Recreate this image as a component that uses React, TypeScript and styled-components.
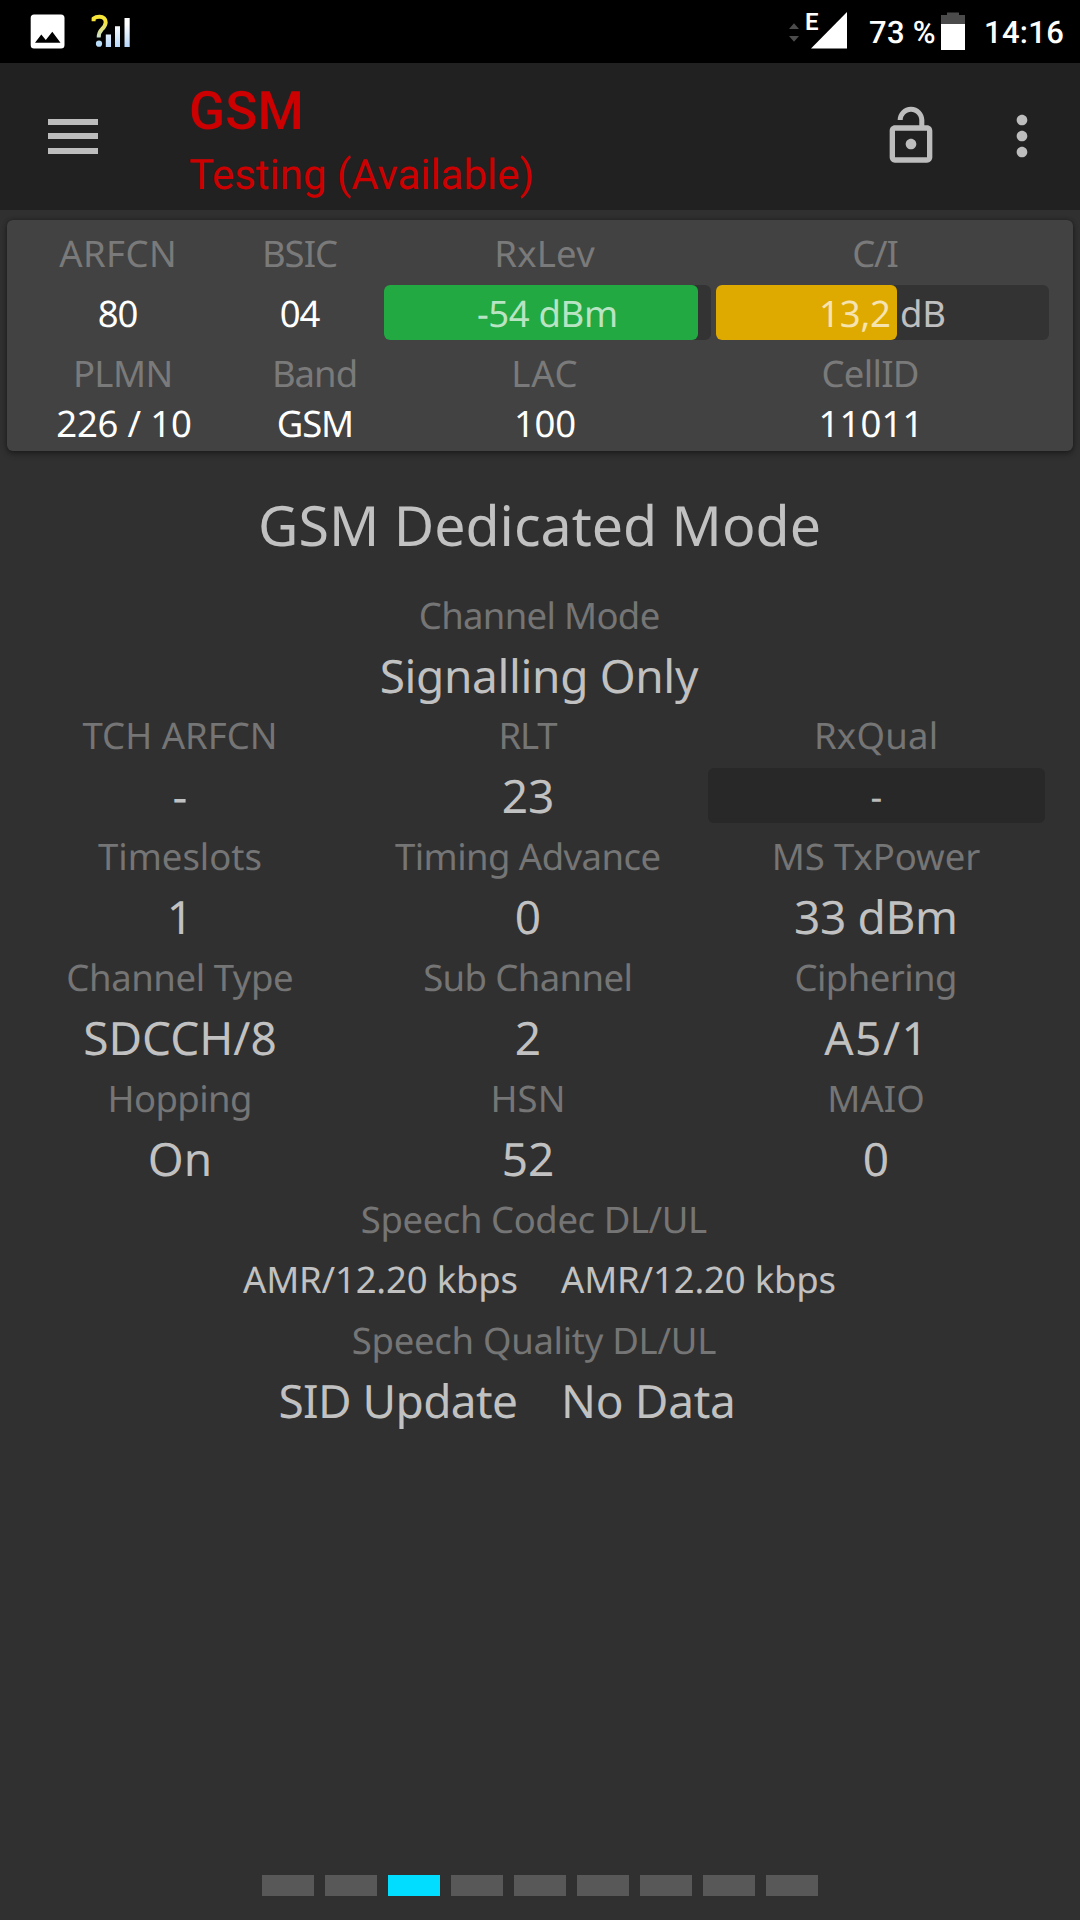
import React from "react";
import styled, { createGlobalStyle } from "styled-components";

const GlobalStyle = createGlobalStyle`
  * { box-sizing: border-box; }
  html, body { margin: 0; padding: 0; background: #303030; }
  body { text-rendering: geometricPrecision; }
`;

const Screen = styled.div`
  display: flex;
  flex-direction: column;
  width: 1080px;
  height: 1920px;
  background: #303030;
  font-family: "Noto Sans", "Open Sans", sans-serif;
  white-space: nowrap;
  overflow: hidden;
`;

/* ---------- status bar ---------- */

const StatusBar = styled.header`
  display: flex;
  align-items: flex-start;
  justify-content: space-between;
  height: 63px;
  padding: 12px 15px 0 30px;
  background: #000;
  color: #fff;
  font-family: Roboto, sans-serif;
`;

const StatusGroup = styled.div`
  display: flex;
  align-items: flex-start;
`;

const StatusText = styled.span<{ $gap: number; $top: number; $width: number }>`
  width: ${(p) => p.$width}px;
  margin: ${(p) => p.$top}px 0 0 ${(p) => p.$gap}px;
  font-size: 31px;
  line-height: 40px;
  font-weight: 500;
  letter-spacing: 0.3px;
`;

const StatusIcon = styled.svg<{ $gap?: number }>`
  display: block;
  margin-left: ${(p) => p.$gap ?? 0}px;
`;

const NetworkType = styled.span`
  width: 5px;
  margin: -4px 0 0 5px;
  padding-right: 6px;
  font-size: 24px;
  line-height: 28px;
  font-weight: 600;
`;

/* ---------- app bar ---------- */

const AppBar = styled.nav`
  display: flex;
  align-items: center;
  height: 147px;
  padding: 0 26px 1px 48px;
  background: #212121;
`;

const MenuButton = styled.div`
  display: flex;
  flex-direction: column;
  gap: 8.5px;
  width: 50px;
  margin-right: 91px;
`;

const MenuLine = styled.span`
  height: 6px;
  background: #bdbdbd;
`;

const TitleBlock = styled.div`
  flex: 1;
  color: #cc0000;
  font-family: Roboto, sans-serif;
`;

const Title = styled.h1`
  margin: 8px 0 8px;
  font-size: 53px;
  line-height: 62px;
  font-weight: 500;
  letter-spacing: 0.15px;
`;

const Subtitle = styled.div`
  font-size: 42px;
  line-height: 51px;
  letter-spacing: -0.04px;
`;

const ActionIcon = styled.svg<{ $gap: number }>`
  display: block;
  width: 64px;
  height: 64px;
  margin-right: ${(p) => p.$gap}px;
  fill: #bdbdbd;
`;

/* ---------- shared text ---------- */

const Text = styled.span<{ $track?: number }>`
  letter-spacing: ${(p) => p.$track ?? 0}px;
  margin-right: ${(p) => -(p.$track ?? 0)}px;
`;

/* ---------- cell card ---------- */

const Card = styled.section`
  flex: none;
  height: 231px;
  margin: 10px 7px 0;
  border-radius: 6px;
  background: #424242;
  box-shadow: 0 3px 6px rgba(0, 0, 0, 0.32), 0 0 4px rgba(0, 0, 0, 0.28);
`;

const CardRow = styled.div<{ $cols: string; $height: number; $top?: number }>`
  display: grid;
  grid-template-columns: ${(p) => p.$cols};
  height: ${(p) => p.$height}px;
  margin-top: ${(p) => p.$top ?? 0}px;
`;

const CardCell = styled.div<{ $label?: boolean }>`
  display: flex;
  align-items: center;
  justify-content: center;
  font-size: 36.5px;
  line-height: 50px;
  color: ${(p) => (p.$label ? "#7a7a7a" : "#ffffff")};
`;

const Meter = styled.div<{ $fill: number; $color: string; $track: string; $end?: number }>`
  display: flex;
  align-items: center;
  justify-content: center;
  height: 55px;
  margin-right: ${(p) => p.$end ?? 0}px;
  border-radius: 6px;
  background: ${(p) => p.$track};
  color: rgba(255, 255, 255, 0.7);
  font-size: 36.5px;
  line-height: 50px;
  position: relative;
  isolation: isolate;
  &::before {
    content: "";
    position: absolute;
    z-index: -1;
    inset: 0 auto 0 0;
    width: ${(p) => p.$fill}px;
    border-radius: 6px;
    background: ${(p) => p.$color};
  }
`;

/* ---------- dedicated mode ---------- */

const Content = styled.main`
  flex: 1;
  padding-top: 12px;
`;

const Heading = styled.h2`
  display: flex;
  justify-content: center;
  margin: 0 1px 0 0;
  font-size: 55.5px;
  line-height: 125px;
  font-weight: 400;
  color: #c1c1c1;
`;

const Grid = styled.div`
  display: grid;
  grid-template-columns: repeat(3, 348px);
  margin-top: -1px;
  padding-left: 6px;
`;

const Label = styled.div<{ $right?: number }>`
  display: flex;
  justify-content: center;
  height: 55px;
  margin-right: ${(p) => p.$right ?? 1}px;
  font-size: 36.5px;
  line-height: 54px;
  color: #757575;
`;

const Value = styled.div<{ $small?: boolean; $right?: number }>`
  display: flex;
  justify-content: center;
  height: 66px;
  margin-right: ${(p) => p.$right ?? 0}px;
  font-size: ${(p) => (p.$small ? 36.5 : 46)}px;
  line-height: ${(p) => (p.$small ? 64 : 66)}px;
  color: #c1c1c1;
`;

const MeterValue = styled.div`
  height: 66px;
  padding: 5px 5px 0 6px;
`;

const Pair = styled.div`
  display: grid;
  grid-template-columns: 518px 1fr;
  column-gap: 43px;
  & > :first-child { justify-content: flex-end; }
  & > :last-child { justify-content: flex-start; }
`;

/* ---------- page indicator ---------- */

const Pager = styled.footer`
  display: flex;
  justify-content: center;
  gap: 11px;
  padding-bottom: 24px;
`;

const PageMark = styled.span<{ $active: boolean }>`
  width: 52px;
  height: 21px;
  background: ${(p) => (p.$active ? "#00ddff" : "#585858")};
`;

type Item = { label: string; lt?: number; value: string; vt?: number; meter?: boolean };

const items: Item[] = [
  { label: "TCH ARFCN", value: "-" },
  { label: "RLT", lt: -1.1, value: "23" },
  { label: "RxQual", lt: 0.25, value: "-", meter: true },
  { label: "Timeslots", value: "1" },
  { label: "Timing Advance", lt: -0.55, value: "0" },
  { label: "MS TxPower", lt: -0.08, value: "33 dBm", vt: -0.35 },
  { label: "Channel Type", lt: -0.42, value: "SDCCH/8", vt: 0 },
  { label: "Sub Channel", lt: -0.6, value: "2" },
  { label: "Ciphering", lt: -0.58, value: "A5/1", vt: 1.5 },
  { label: "Hopping", lt: -0.6, value: "On", vt: 0 },
  { label: "HSN", lt: 0, value: "52" },
  { label: "MAIO", lt: 0, value: "0" },
];

export default function App() {
  return (
    <Screen>
      <GlobalStyle />
      <StatusBar>
        <StatusGroup>
          <StatusIcon width="35" height="40" viewBox="0 0 35 40">
            <path
              fill="#fff"
              fillRule="evenodd"
              d="M4 2.5H31Q34.5 2.5 34.5 6V33Q34.5 36.5 31 36.5H4Q.7 36.5 .7 33V6Q.7 2.5 4 2.5ZM5 30.7H30.5L22.3 19.7L15.8 28L11.3 22.5Z"
            />
          </StatusIcon>
          <StatusIcon $gap={26} width="42" height="40" viewBox="0 0 42 40">
            <defs>
              <linearGradient id="query" gradientUnits="userSpaceOnUse" x1="0" y1="3" x2="0" y2="35">
                <stop offset="0.2" stopColor="#f7e53a" />
                <stop offset="0.85" stopColor="#b9dcf8" />
              </linearGradient>
              <linearGradient id="bars" gradientUnits="userSpaceOnUse" x1="0" y1="6" x2="0" y2="35">
                <stop offset="0.2" stopColor="#ffffff" />
                <stop offset="1" stopColor="#b8d8fa" />
              </linearGradient>
            </defs>
            <path
              d="M2.6 9.2V6.6C4.4 5.1 6.6 4.6 8.8 4.7C12.2 4.8 14.7 6.8 14.7 10.2C14.7 13.2 13.2 15 11 17.2C8.7 19.5 7.7 21.3 7.7 25.6"
              fill="none"
              stroke="url(#query)"
              strokeWidth="4"
            />
            <circle cx="8" cy="31.7" r="3.1" fill="url(#query)" />
            <path d="M14.8 22.5h5.2V35h-5.2zM24 14.3h5V35h-5zM33.5 6h5.2v29h-5.2z" fill="url(#bars)" />
          </StatusIcon>
        </StatusGroup>
        <StatusGroup>
          <StatusIcon width="12" height="32" viewBox="0 0 12 32">
            <path d="M1 17L6 11.3L11 17ZM1 24H11L6 29.7Z" fill="#4b4b4b" />
          </StatusIcon>
          <NetworkType>E</NetworkType>
          <StatusIcon width="36" height="37" viewBox="0 0 36 37">
            <path d="M36 0V36.5H0Z" fill="#fff" />
          </StatusIcon>
          <StatusText $gap={22} $top={1} $width={68}>73 %</StatusText>
          <StatusIcon $gap={4} width="24" height="38" viewBox="0 0 24 38">
            <path d="M0 3H6V.4H18V3H24V12H0Z" fill="#4b4b4b" />
            <path d="M0 12H24V38H0Z" fill="#fff" />
          </StatusIcon>
          <StatusText $gap={19} $top={1} $width={81}>14:16</StatusText>
        </StatusGroup>
      </StatusBar>

      <AppBar>
        <MenuButton>
          <MenuLine />
          <MenuLine />
          <MenuLine />
        </MenuButton>
        <TitleBlock>
          <Title>GSM</Title>
          <Subtitle>Testing (Available)</Subtitle>
        </TitleBlock>
        <ActionIcon viewBox="0 0 24 24" $gap={47}>
          <path d="M12 17c1.1 0 2-.9 2-2s-.9-2-2-2-2 .9-2 2 .9 2 2 2zm6-9h-1V6c0-2.76-2.24-5-5-5S7 3.24 7 6h1.9c0-1.71 1.39-3.1 3.1-3.1 1.71 0 3.1 1.39 3.1 3.1v2H6c-1.1 0-2 .9-2 2v10c0 1.1.9 2 2 2h12c1.1 0 2-.9 2-2V10c0-1.1-.9-2-2-2zm0 12H6V10h12v10z" />
        </ActionIcon>
        <ActionIcon viewBox="0 0 24 24" $gap={0}>
          <path d="M12 8c1.1 0 2-.9 2-2s-.9-2-2-2-2 .9-2 2 .9 2 2 2zm0 2c-1.1 0-2 .9-2 2s.9 2 2 2 2-.9 2-2-.9-2-2-2zm0 6c-1.1 0-2 .9-2 2s.9 2 2 2 2-.9 2-2-.9-2-2-2z" />
        </ActionIcon>
      </AppBar>

      <Card>
        <CardRow $cols="222px 142px 347px 315px" $height={65}>
          <CardCell $label><Text $track={0.4}>ARFCN</Text></CardCell>
          <CardCell $label><Text $track={-1}>BSIC</Text></CardCell>
          <CardCell $label><Text $track={0.25}>RxLev</Text></CardCell>
          <CardCell $label><Text $track={-1.2}>C/I</Text></CardCell>
        </CardRow>
        <CardRow $cols="222px 142px 13px 332px 333px" $height={55}>
          <CardCell><Text $track={-1.2}>80</Text></CardCell>
          <CardCell><Text $track={-1.2}>04</Text></CardCell>
          <span />
          <Meter $fill={314} $color="#22a941" $track="#333333" $end={5}>
            <Text $track={-0.36}>-54 dBm</Text>
          </Meter>
          <Meter $fill={180.5} $color="#dfaa00" $track="#333333">
            <Text $track={-0.2}>13,2 dB</Text>
          </Meter>
        </CardRow>
        <CardRow $cols="232px 152px 307px 345px" $height={50} $top={8}>
          <CardCell $label><Text $track={-0.6}>PLMN</Text></CardCell>
          <CardCell $label><Text $track={-1}>Band</Text></CardCell>
          <CardCell $label><Text $track={0.8}>LAC</Text></CardCell>
          <CardCell $label><Text $track={-0.7}>CellID</Text></CardCell>
        </CardRow>
        <CardRow $cols="234px 149px 310px 342px" $height={50}>
          <CardCell><Text $track={-0.2}>226 / 10</Text></CardCell>
          <CardCell><Text $track={-1.2}>GSM</Text></CardCell>
          <CardCell><Text $track={-0.3}>100</Text></CardCell>
          <CardCell><Text $track={0.1}>11011</Text></CardCell>
        </CardRow>
      </Card>

      <Content>
        <Heading>GSM Dedicated Mode</Heading>
        <Label><Text $track={-0.68}>Channel Mode</Text></Label>
        <Value $right={2}><Text $track={-0.35}>Signalling Only</Text></Value>
        <Grid>
          {items.map((it) => (
            <div key={it.label}>
              <Label $right={0}><Text $track={it.lt}>{it.label}</Text></Label>
              {it.meter ? (
                <MeterValue>
                  <Meter $fill={0} $color="transparent" $track="#282828">
                    <Text>{it.value}</Text>
                  </Meter>
                </MeterValue>
              ) : (
                <Value><Text $track={it.vt}>{it.value}</Text></Value>
              )}
            </div>
          ))}
        </Grid>
        <Label $right={12}><Text $track={-0.43}>Speech Codec DL/UL</Text></Label>
        <Pair>
          <Value $small><Text $track={-0.18}>AMR/12.20 kbps</Text></Value>
          <Value $small><Text $track={-0.18}>AMR/12.20 kbps</Text></Value>
        </Pair>
        <Label $right={12}><Text $track={-0.29}>Speech Quality DL/UL</Text></Label>
        <Pair>
          <Value><Text $track={-0.6}>SID Update</Text></Value>
          <Value><Text $track={-0.3}>No Data</Text></Value>
        </Pair>
      </Content>

      <Pager>
        {Array.from({ length: 9 }, (_, i) => (
          <PageMark key={i} $active={i === 2} />
        ))}
      </Pager>
    </Screen>
  );
}
